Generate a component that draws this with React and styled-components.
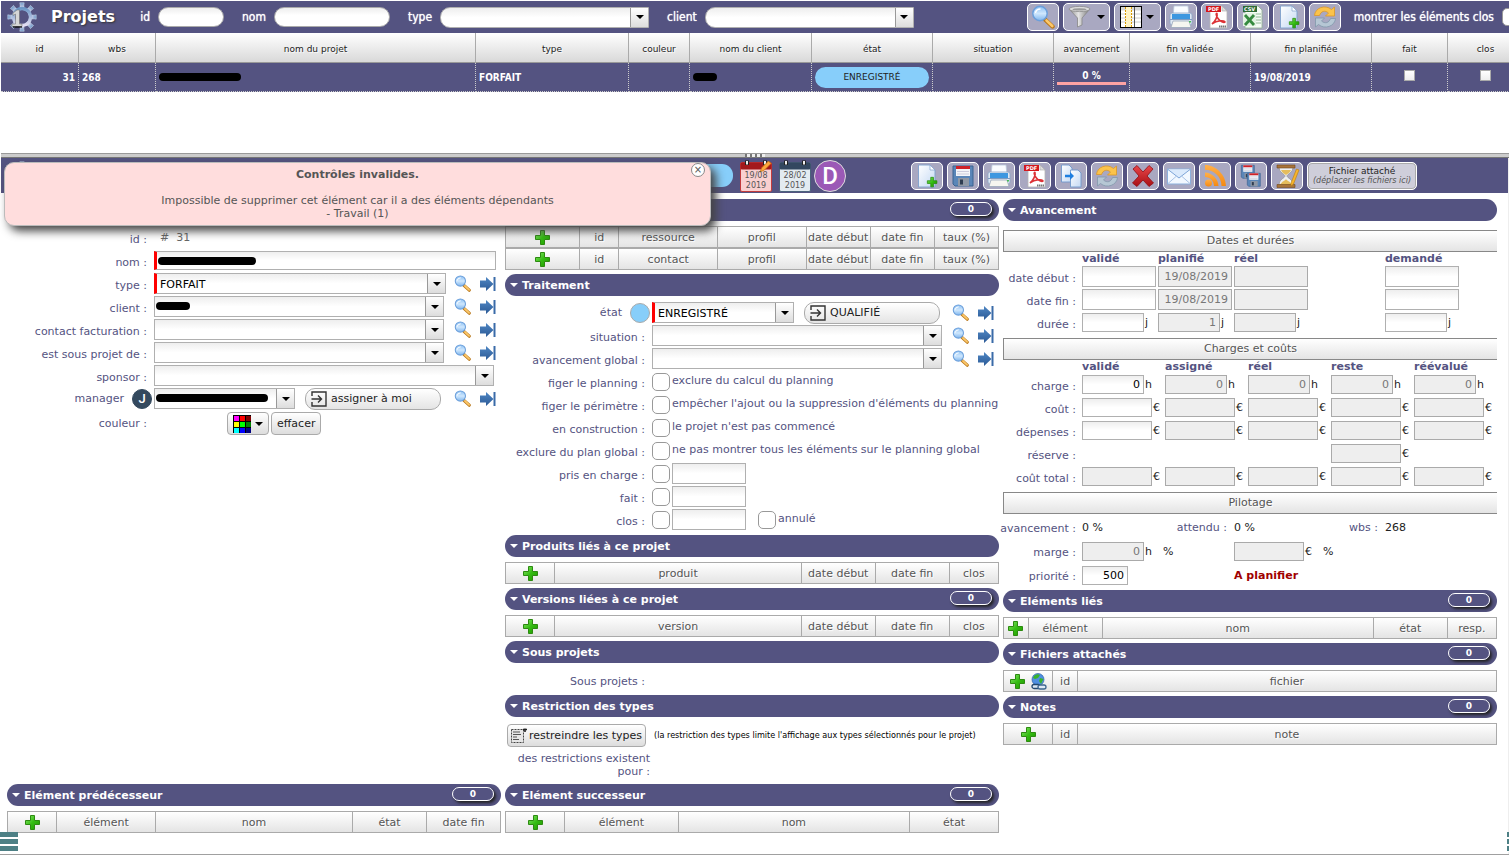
import React from 'react';
import styled, { createGlobalStyle, css } from 'styled-components';

const PRIMARY = '#545381';
const SANS = '"DejaVu Sans", Verdana, sans-serif';
const NARROW = '"DejaVu Sans Condensed", "DejaVu Sans", Tahoma, sans-serif';

const GlobalStyle = createGlobalStyle`
  *, *::before, *::after {
    box-sizing: border-box;
  }

  body {
    margin: 0;
    background: #fff;
    font-family: ${SANS};
    font-size: 11px;
    line-height: 13px;
    color: #000;
    overflow: hidden;
  }

  button, input, select {
    font: inherit;
    color: inherit;
    margin: 0;
    padding: 0;
  }

  svg {
    display: block;
    flex: none;
  }
`;

/* ---------- icons ---------- */

const HiddenSvg = styled.svg`
  position: absolute;
  width: 0;
  height: 0;
`;

const Gradients = () => (
  <HiddenSvg aria-hidden="true">
    <defs>
      <linearGradient id="lens" x1="0" y1="0" x2="0" y2="1">
        <stop offset="0" stopColor="#8cc0f4" />
        <stop offset="0.5" stopColor="#cfe7fd" />
        <stop offset="1" stopColor="#7fb6ee" />
      </linearGradient>
      <linearGradient id="green" x1="0" y1="0" x2="1" y2="1">
        <stop offset="0" stopColor="#8be86f" />
        <stop offset="0.5" stopColor="#35bd12" />
        <stop offset="1" stopColor="#1f9400" />
      </linearGradient>
      <linearGradient id="paper" x1="0" y1="0" x2="1" y2="1">
        <stop offset="0" stopColor="#fff" />
        <stop offset="1" stopColor="#c3d8f3" />
      </linearGradient>
      <linearGradient id="metal" x1="0" y1="0" x2="1" y2="0">
        <stop offset="0" stopColor="#8a8a8a" />
        <stop offset="0.45" stopColor="#e4e4e4" />
        <stop offset="1" stopColor="#777" />
      </linearGradient>
      <linearGradient id="red" x1="0" y1="0" x2="0" y2="1">
        <stop offset="0" stopColor="#e8474a" />
        <stop offset="1" stopColor="#a90f14" />
      </linearGradient>
      <linearGradient id="orange" x1="0" y1="0" x2="0" y2="1">
        <stop offset="0" stopColor="#ffb04a" />
        <stop offset="1" stopColor="#f58a12" />
      </linearGradient>
      <linearGradient id="blue" x1="0" y1="0" x2="0" y2="1">
        <stop offset="0" stopColor="#4f87c4" />
        <stop offset="1" stopColor="#2c5a96" />
      </linearGradient>
      <linearGradient id="gear" x1="0" y1="0" x2="0" y2="1">
        <stop offset="0" stopColor="#6d97c6" />
        <stop offset="1" stopColor="#e4dff3" />
      </linearGradient>
    </defs>
  </HiddenSvg>
);

const GearIcon = () => (
  <svg width="30" height="30" viewBox="0 0 30 30">
    <g fill="url(#gear)" stroke="#c5d3e6" strokeWidth="0.6">
      {[0, 45, 90, 135, 180, 225, 270, 315].map((a) => (
        <path key={a} d="M12.8 7 L13.2 3 L12.8 0.8 H17.2 L16.8 3 L17.2 7 Z" transform={`rotate(${a} 15 15)`} />
      ))}
    </g>
    <circle cx="15" cy="15" r="8.4" fill="none" stroke="url(#gear)" strokeWidth="3.6" />
    <circle cx="15" cy="15" r="6.6" fill={PRIMARY} />
    <path d="M6 11 L10 8 H12.5 V22 H15 V24.5 H5 V22 H8.5 V12 L6 13.5 Z" fill="#d6d6d6" stroke="#666" strokeWidth="0.5" />
    <path d="M6 25 H15" stroke="#000" strokeWidth="1.2" />
  </svg>
);

const SearchIcon = ({ size = 24 }) => (
  <svg width={size} height={size} viewBox="0 0 24 24">
    <path d="M14 14.5 L21.5 21.5" stroke="#b9771a" strokeWidth="4.4" strokeLinecap="round" />
    <path d="M15.5 15.5 L21.3 21" stroke="#fcc86a" strokeWidth="2.6" strokeLinecap="round" />
    <circle cx="9" cy="8.5" r="7.2" fill="url(#lens)" stroke="#6b9fdb" strokeWidth="1.5" />
    <path d="M4.5 8 Q5 4 9.5 4" stroke="#fff" strokeWidth="1.4" fill="none" />
  </svg>
);

const GotoIcon = () => (
  <svg width="16" height="16" viewBox="0 0 16 16">
    <path d="M0 4.5 H6 V1 L13.5 8 L6 15 V11.5 H0 Z" fill="url(#blue)" />
    <path d="M14.5 1 V15" stroke="#3a6ba8" strokeWidth="2" />
  </svg>
);

const FunnelIcon = () => (
  <svg width="26" height="24" viewBox="0 0 26 24">
    <path d="M2 4 L10.5 13 V22 L15 20 V13 L23 4 Z" fill="url(#metal)" stroke="#888" strokeWidth="0.8" />
    <ellipse cx="12.5" cy="4" rx="10.5" ry="2.6" fill="#ddd" stroke="#8d8d8d" strokeWidth="0.8" />
    <ellipse cx="12.5" cy="4.4" rx="7" ry="1.2" fill="#999" />
  </svg>
);

const ColumnsIcon = () => (
  <svg width="22" height="22" viewBox="0 0 22 22">
    <rect x="0.5" y="0.5" width="21" height="21" fill="#fff" stroke="#000" />
    <path d="M1 1 H21 V4.5 H1 Z" fill="#d6d6d6" />
    <path d="M1 8 H21 M1 12 H21 M1 16 H21" stroke="#ccc" />
    <path d="M14.5 1 V21" stroke="#555" />
    <rect x="6" y="1" width="5" height="20" fill="#fff3c4" />
    <path d="M5.5 1 V21 M11.5 1 V21" stroke="#d99a00" strokeDasharray="2 1" />
  </svg>
);

const PrintIcon = () => (
  <svg width="26" height="24" viewBox="0 0 26 24">
    <path d="M6 1 H20 L21 11 H5 Z" fill="#fafcff" stroke="#b9c8dc" strokeWidth="0.8" />
    <rect x="2" y="8" width="22" height="12" rx="2" fill="#dfe8f4" stroke="#8ba4c4" strokeWidth="0.8" />
    <rect x="4" y="9" width="18" height="5" fill="#3d97e0" />
    <path d="M2 14.5 H24" stroke="#7e9cc2" />
    <path d="M5 16 H21 L23 22.5 H3 Z" fill="#f6f6f0" stroke="#9aa8bb" strokeWidth="0.8" />
    <rect x="21" y="16" width="2" height="1.5" fill="#4b5" />
  </svg>
);

const TagText = styled.text`
  font-family: ${SANS};
  font-size: 5px;
  font-weight: bold;
  fill: #fff;
`;

const PdfIcon = () => (
  <svg width="24" height="24" viewBox="0 0 24 24">
    <path d="M5 1 H17 L22 6 V23 H5 Z" fill="#fff" stroke="#b5b5b5" strokeWidth="0.8" />
    <path d="M17 1 V6 H22 Z" fill="#ddd" stroke="#aaa" strokeWidth="0.6" />
    <rect x="1" y="1" width="15" height="6" fill="#d3181d" />
    <TagText x="3" y="6">PDF</TagText>
    <path d="M7 19 C10 17 13 11 12 8.5 C11 8 10.5 10 13 13.5 C15 16.5 19 18 20 17 C20 15 12 15 7 19 Z" fill="none" stroke="#dc3236" strokeWidth="1.6" />
    <path d="M14 21.5 H21" stroke="#777" strokeWidth="2" strokeDasharray="1.5 0.5" />
  </svg>
);

const CsvIcon = () => (
  <svg width="24" height="24" viewBox="0 0 24 24">
    <path d="M4 1 H17 L21 5 V23 H4 Z" fill="#f5fbf5" stroke="#8fae92" strokeWidth="0.8" />
    <path d="M13 9 H20 M13 12 H20 M13 15 H20 M13 18 H20" stroke="#8fb895" />
    <rect x="2" y="1" width="14" height="6" fill="#2e6b35" />
    <TagText x="3" y="6">CSV</TagText>
    <rect x="2" y="8" width="13" height="13" fill="#e3f2e3" />
    <path d="M4 10 L13 20 M13 10 L4 20" stroke="#358a3f" strokeWidth="2.8" />
  </svg>
);

const PLUS = 'M5.5 0.5 H9.5 V5.5 H14.5 V9.5 H9.5 V14.5 H5.5 V9.5 H0.5 V5.5 H5.5 Z';

const PlusIcon = () => (
  <svg width="15" height="15" viewBox="0 0 15 15">
    <path d={PLUS} fill="url(#green)" stroke="#2d8a10" />
  </svg>
);

const NewIcon = () => (
  <svg width="24" height="24" viewBox="0 0 24 24">
    <path d="M3.5 1 H15 L20 6 V23 H3.5 Z" fill="url(#paper)" stroke="#7ea0cc" strokeWidth="0.9" />
    <path d="M15 1 V6 H20 Z" fill="#fff" stroke="#7ea0cc" strokeWidth="0.7" />
    <path d={PLUS} transform="translate(12 13) scale(0.68)" fill="url(#green)" stroke="#1f8500" />
  </svg>
);

const RefreshIcon = () => (
  <svg width="24" height="24" viewBox="0 0 24 24">
    <path d="M1.5 10.5 C2 3 12 -1 18.5 4.5 L21.5 2 V11 H12.5 L15.5 8 C12 5 8 6 6.5 10.5 Z" fill="#fbc34b" stroke="#dc9827" strokeWidth="0.8" />
    <path d="M22.5 13.5 C22 21 12 25 5.5 19.5 L2.5 22 V13 H11.5 L8.5 16 C12 19 16 18 17.5 13.5 Z" fill="#b6c7d4" stroke="#8297ab" strokeWidth="0.8" />
  </svg>
);

const Floppy = () => (
  <>
    <path d="M2 2 H22 V22 H4 L2 20 Z" fill="#5a86b8" stroke="#3b6290" />
    <rect x="5" y="2" width="14" height="10" fill="#f3f5f8" />
    <rect x="5" y="2" width="14" height="3" fill="#cf2229" />
    <path d="M6 7.5 H18 M6 10 H18" stroke="#ccd" />
    <rect x="7" y="14" width="11" height="8" fill="#8f98a5" />
    <rect x="9" y="15.5" width="3" height="5" fill="#2e3c50" />
  </>
);

const SaveIcon = () => (
  <svg width="24" height="24" viewBox="0 0 24 24"><Floppy /></svg>
);

const MultiSaveIcon = () => (
  <svg width="24" height="24" viewBox="0 0 24 24">
    <g transform="translate(1 0) scale(0.65)"><Floppy /></g>
    <g transform="translate(7 8) scale(0.65)"><Floppy /></g>
  </svg>
);

const CopyIcon = () => (
  <svg width="24" height="24" viewBox="0 0 24 24">
    <path d="M2.5 1 H10 L13 4 V18 H2.5 Z" fill="url(#paper)" stroke="#6f97cc" strokeWidth="0.9" />
    <path d="M11.5 6 H19 L22 9 V23 H11.5 Z" fill="url(#paper)" stroke="#6f97cc" strokeWidth="0.9" />
    <path d="M6 10.8 H11 V8 L15 12 L11 16 V13.2 H6 Z" fill="#1f7fe0" />
  </svg>
);

const DeleteIcon = () => (
  <svg width="24" height="24" viewBox="0 0 24 24">
    <path d="M2 5 L6 1.5 L12 8 L18 1.5 L22 5 L16 12 L22.5 19 L18 22.5 L12 16 L6 22.5 L1.5 19 L8 12 Z" fill="url(#red)" stroke="#8f0d12" strokeWidth="0.8" />
  </svg>
);

const MailIcon = () => (
  <svg width="26" height="24" viewBox="0 0 26 24">
    <rect x="1.5" y="5" width="23" height="15" fill="#f2f8ff" stroke="#8db0dc" />
    <path d="M2 19.5 L10 12.5 M24 19.5 L16 12.5" stroke="#a9c3e6" />
    <path d="M2 5.5 L13 14 L24 5.5" fill="#dbeafc" stroke="#7ea5d8" />
  </svg>
);

const RssIcon = () => (
  <svg width="24" height="24" viewBox="0 0 24 24" fill="url(#orange)">
    <circle cx="5.5" cy="19" r="3.5" />
    <path d="M2 8.5 C9 8.5 15.5 15 15.5 22 H11 C11 17 7 13 2 13 Z" />
    <path d="M2 1 C13 1 23 11 23 22 H18.5 C18.5 13 11 5.8 2 5.8 Z" />
  </svg>
);

const HourglassIcon = () => (
  <svg width="26" height="24" viewBox="0 0 26 24">
    <path d="M5 3 C5 9 11 10 11 12 C11 14 5 15 5 21 H19 C19 15 13 14 13 12 C13 10 19 9 19 3 Z" fill="#eef0f2" stroke="#999" strokeWidth="0.8" />
    <path d="M7 6 H17 C16 9 13 10 12 11 C11 10 8 9 7 6 Z M6 21 C8 17 11 17 12 15 C13 17 16 17 18 21 Z" fill="#e5bd5c" />
    <path d="M3 1 H21 V4 H3 Z M3 20.5 H21 V23.5 H3 Z" fill="#a8743a" stroke="#70481c" strokeWidth="0.6" />
    <path d="M17 19 L22.5 5 L25 6 L19.5 20 L17 22 Z" fill="#f7b52c" stroke="#b97a10" strokeWidth="0.6" />
  </svg>
);

const AssignIcon = () => (
  <svg width="16" height="16" viewBox="0 0 16 16" fill="none" stroke="#333" strokeWidth="1.4">
    <path d="M1 5 V1 H15 V15 H1 V11" />
    <path d="M0.5 8 H10 M7 4.5 L10.5 8 L7 11.5" />
  </svg>
);

const GlobeLinkIcon = () => (
  <svg width="16" height="17" viewBox="0 0 16 17">
    <circle cx="7" cy="6.5" r="6" fill="#4f8fe0" stroke="#2b62ab" strokeWidth="0.7" />
    <path d="M3 3 Q6 0 9 2 L7 5 L4 6 L2 5 Z M9 5 L12.5 6 L10 11 L8 8 Z" fill="#39b42c" />
    <rect x="1" y="11.5" width="8" height="4" rx="2" fill="#dce8f5" stroke="#22486f" strokeWidth="1.3" />
    <rect x="7" y="12" width="8" height="4" rx="2" fill="#dce8f5" stroke="#3d668f" strokeWidth="1.3" />
  </svg>
);

const ListIcon = () => (
  <svg width="16" height="16" viewBox="0 0 16 16">
    <rect x="0.5" y="1.5" width="12" height="13" fill="#e6e6e6" stroke="#444" strokeDasharray="2 1" />
    <path d="M2 4 H9 M2 6.5 H10 M2 9 H6 M2 11.5 H8" stroke="#555" />
    <path d="M12 1.5 H16 M14 0.5 V4" stroke="#222" strokeWidth="1.6" />
  </svg>
);

const PaletteIcon = () => {
  const colors = ['#f0f', '#f00', '#800000', '#ff0', '#0f0', '#008000', '#0ff', '#00f', '#000080'];
  return (
    <svg width="18" height="18" viewBox="0 0 18 18">
      <rect width="18" height="18" />
      {colors.map((color, i) => (
        <rect key={color} x={1 + (i % 3) * 6} y={1 + Math.floor(i / 3) * 6} width="5" height="5" fill={color} />
      ))}
    </svg>
  );
};

const Caret = ({ color = '#000' }) => (
  <svg width="8" height="4" viewBox="0 0 8 4">
    <path d="M0 0 H8 L4 4 Z" fill={color} />
  </svg>
);

const CalendarShape = ({ dark, fill, edge, pencil }) => (
  <svg width="32" height="32" viewBox="0 0 32 32">
    <rect x="0.5" y="2.5" width="31" height="29" rx="1.5" fill={fill} stroke={edge} />
    <rect x="0.5" y="2.5" width="31" height="7" rx="1.5" fill={dark} />
    <path d="M7 0.5 V5 M25 0.5 V5" stroke="#222" strokeWidth="4" />
    <path d="M7 1 V4.5 M25 1 V4.5" stroke="#eee" strokeWidth="2" />
    {pencil && <path d="M20 12 L22 7.5 L28.5 1 L31 3.5 L24.5 10 Z" fill="#fba83c" stroke="#c96f10" strokeWidth="0.7" />}
  </svg>
);

/* ---------- list pane ---------- */

const Page = styled.div`
  display: flex;
  flex-direction: column;
  min-height: 100vh;
  padding: 1px 0 0 1px;
  position: relative;
  border-bottom: 1px solid #a0a0a0;
  overflow: hidden;
`;

const ListPane = styled.section`
  min-height: 152px;
`;

const TopBar = styled.header`
  display: flex;
  align-items: center;
  height: 32px;
  padding-left: 6px;
  background: ${PRIMARY};
  color: #fff;
`;

const PageTitle = styled.h1`
  margin: 0 25px 0 14px;
  font-size: 16px;
  line-height: 20px;
  text-shadow: 1px 1px 2px #333;
`;

const Filters = styled.form`
  display: flex;
  gap: 18px;
`;

const FilterLabel = styled.label`
  display: flex;
  align-items: center;
  gap: 8px;
  font-family: ${NARROW};
  font-size: 12px;
  white-space: nowrap;
  text-shadow: 0 0 1px #fff;
`;

const FilterInput = styled.input`
  width: ${({ $width }) => $width}px;
  height: 20px;
  padding: 0 8px;
  border: 1px solid #aaa;
  border-radius: 10px;
  background: linear-gradient(#eee, #fff 40%);
  color: #000;
`;

const Toolbar = styled.div`
  display: flex;
  align-items: center;
  gap: 4px;
  margin-left: auto;
`;

const ListToolbar = styled(Toolbar)`
  margin-right: -11px;
`;

const ToolButton = styled.button`
  display: flex;
  align-items: center;
  justify-content: center;
  gap: 4px;
  flex: none;
  width: ${({ $wide }) => ($wide ? 47 : 32)}px;
  height: 28px;
  border: 1px solid #fff;
  border-radius: 5px;
  background: #a9a8c1;
`;

const ClosedLabel = styled(FilterLabel)`
  margin-left: 9px;
`;

const CheckBox = styled.input`
  appearance: none;
  flex: none;
  width: 18px;
  height: 18px;
  border: 1px solid #999;
  border-radius: 5px;
  background: #fff;

  &:checked {
    background: ${PRIMARY};
  }
`;

const ListTable = styled.table`
  width: calc(100% + 15px);
  table-layout: fixed;
  border-spacing: 0;
  font-size: 9px;

  th {
    height: 30px;
    padding: 3px 0 0;
    border-right: 1px solid #aaa;
    border-bottom: 1px solid #999;
    background: linear-gradient(#fff, #d9d9d9);
    font-weight: normal;
    color: #222;
    text-shadow: 1px 1px 1px #fff;
  }

  td {
    height: 29px;
    padding: 0 3px;
    border-right: 1px dotted #ccc;
    border-bottom: 1px dotted #ccc;
    background: ${PRIMARY};
    color: #fff;
    font-family: ${NARROW};
    font-weight: bold;
    font-size: 10px;
  }
`;

const RightCell = styled.td`
  text-align: right;
`;

const CenterCell = styled.td`
  text-align: center;
`;

const StatusPill = styled.span`
  display: block;
  padding: 4px 0;
  border-radius: 11px;
  background: #87cefa;
  color: #222;
  font-family: ${SANS};
  font-size: 9px;
  font-weight: normal;
  text-align: center;
`;

const ProgressCell = styled.div`
  border-bottom: 3px solid #ffa3a3;
`;

const SmallCheck = styled.input`
  appearance: none;
  width: 11px;
  height: 11px;
  border: 1px solid #aaa;
  background: linear-gradient(#fff, #eee);
`;

const Redacted = styled.span`
  display: block;
  width: ${({ $width }) => $width}px;
  height: ${({ $height }) => $height || 8}px;
  border-radius: 4px;
  background: #000;
`;

const Splitter = styled.div`
  display: flex;
  justify-content: center;
  align-items: center;
  height: 5px;
  border-top: 1px solid #999;
  border-bottom: 1px solid #777;
  background: #ccc;
`;

const Grip = styled.span`
  width: 20px;
  height: 3px;
  background: repeating-linear-gradient(90deg, #777 0 2px, #eee 2px 5px);
`;

/* ---------- detail pane ---------- */

const DetailPane = styled.section`
  position: relative;
  flex: 1;
  border-right: 1px solid #eee;
`;

const DetailBar = styled.header`
  display: flex;
  align-items: center;
  height: 35px;
  padding-right: 91px;
  background: ${PRIMARY};
  color: #fff;
`;

const DetailTitle = styled.div`
  display: flex;
  align-items: center;
  flex: 0 0 732px;
  padding-left: 6px;

  ${StatusPill} {
    width: 120px;
    height: 23px;
    margin-left: auto;
  }
`;

const Calendars = styled.div`
  display: flex;
  align-items: center;
  gap: 7px;
  margin-left: 7px;
`;

const CalendarBox = styled.div`
  display: grid;
  color: #555;
  font-size: 8px;
  line-height: 10px;
  text-align: center;

  > * {
    grid-area: 1 / 1;
  }

  span {
    padding-top: 11px;
  }
`;

const Avatar = styled.span`
  display: flex;
  align-items: center;
  justify-content: center;
  flex: none;
  width: ${({ $size }) => $size}px;
  height: ${({ $size }) => $size}px;
  border: 1px solid ${({ $edge }) => $edge || '#ddd'};
  border-radius: 50%;
  background: ${({ $color }) => $color};
  color: #fff;
  font-family: Roboto, sans-serif;
  font-weight: 500;
  font-size: ${({ $size }) => ($size > 24 ? 24 : 13)}px;
  line-height: 1;
`;

const UserAvatar = styled(Avatar)`
  margin-left: 3px;
`;

const DropZone = styled.button`
  height: 28px;
  width: 110px;
  padding: 0 2px;
  border: 1px solid #fff;
  border-radius: 5px;
  background: #cfceda;
  color: #222;
  font-size: 9px;
  line-height: 9px;
  white-space: nowrap;
  box-shadow: inset 0 0 0 1px #aaa;

  em {
    display: block;
    color: #555;
    font-size: 8px;
  }
`;

const Toast = styled.div`
  position: absolute;
  top: 4px;
  left: 3px;
  width: 707px;
  padding: 5px 0;
  border: 1px solid #bbb;
  border-radius: 10px;
  background: #ffdddd;
  box-shadow: 5px 5px 10px #444;
  color: #555;
  text-align: center;

  p {
    margin: 13px 0 0;
  }
`;

const CloseButton = styled.button`
  position: absolute;
  top: 0;
  right: 5px;
  width: 14px;
  height: 14px;
  border: 1px solid #888;
  border-radius: 50%;
  background: #fff;
  color: #555;
  font-size: 10px;
  line-height: 10px;
`;

const Columns = styled.main`
  display: grid;
  grid-template-columns: repeat(3, minmax(0, 1fr));
  grid-template-rows: auto auto;
  column-gap: 4px;
  padding: 6px 11px 0 6px;
`;

const SideColumn = styled.div`
  grid-column: 3;
  grid-row: 1 / 3;
`;

const Heading = styled.h2`
  display: flex;
  align-items: center;
  gap: 4px;
  height: 22px;
  margin: 0 0 5px;
  padding: 0 7px 0 5px;
  border-radius: 11px;
  background: ${PRIMARY};
  color: #fff;
  font-size: 11px;
  line-height: 13px;
`;

const Count = styled.span`
  width: 42px;
  height: 14px;
  margin: 0 0 3px auto;
  border: 1px solid #fff;
  border-radius: 7px;
  box-shadow: 2px 2px 3px #222;
  font-size: 9px;
  line-height: 12px;
  text-align: center;
`;

const HeadTable = styled.table`
  width: 100%;
  table-layout: fixed;
  border-spacing: 0;
  border: 1px solid #aaa;
  border-left: 0;
  margin-bottom: ${({ $stacked }) => ($stacked ? 0 : 4)}px;

  th {
    height: 20px;
    padding: 0;
    border-left: 1px solid #aaa;
    background: linear-gradient(#fff, #e4e4e4);
    color: #555;
    font-weight: normal;
    white-space: nowrap;
    text-shadow: 1px 1px 1px #fff;
  }
`;

const IconButton = styled.button`
  display: inline-flex;
  align-items: center;
  border: 0;
  background: none;
  vertical-align: middle;
  margin: 0 3px;
`;

const Form = styled.div`
  padding: 1px 0 3px;
`;

const Row = styled.div`
  display: grid;
  grid-template-columns: 147px minmax(0, 1fr);
  grid-template-rows: 21px;
  height: 23px;
  padding-right: 5px;
`;

const Label = styled.label`
  display: flex;
  align-items: center;
  justify-content: flex-end;
  gap: 8px;
  padding: ${({ $avatar }) => ($avatar ? '0 2px 0 0' : '3px 7px 0 0')};
  color: ${PRIMARY};
  white-space: nowrap;
`;

const Fields = styled.div`
  display: flex;
  align-items: center;
  color: ${PRIMARY};
`;

const boxStyle = css`
  border: 1px solid #b0b0b0;
  background: linear-gradient(#eee, #fff 50%);
  ${({ $required }) => $required && 'border-left: 3px solid #f00;'}
`;

const SelectBox = styled.span`
  display: flex;
  position: relative;
  flex: ${({ $width }) => ($width ? `0 0 ${$width}px` : 1)};
  height: 21px;
  margin-right: ${({ $required, $width }) => ($required || $width ? 0 : 2)}px;
  ${boxStyle}
  border-radius: ${({ $round }) => ($round ? '10px 0 0 10px' : 0)};

  select {
    appearance: none;
    flex: 1;
    min-width: 0;
    padding: 1px 22px 0 3px;
    border: 0;
    background: none;
    color: #000;
  }
`;

const SelectArrow = styled.span`
  display: flex;
  align-items: center;
  justify-content: center;
  width: 18px;
  margin-left: -18px;
  border-left: 1px solid #999;
  background: linear-gradient(#fff, #ddd);
  pointer-events: none;
`;

const Cover = styled.span`
  position: absolute;
  left: 1px;
  top: 5px;
`;

const TextBox = styled.span`
  position: relative;
  display: flex;
  flex: 1;
  height: 19px;
  ${boxStyle}

  input {
    flex: 1;
    border: 0;
    background: none;
  }
`;

const Input = styled.input`
  flex: none;
  width: ${({ $width }) => $width}px;
  height: ${({ $tall }) => ($tall ? 21 : 19)}px;
  padding: 0 3px;
  ${boxStyle}
  color: #000;
  text-align: right;

  &:disabled {
    border-color: #aaa;
    background: #eee;
    color: #777;
  }
`;

const RowIcons = styled.span`
  display: flex;
  gap: 9px;
  margin-left: auto;
  padding-left: 8px;

  ${IconButton} {
    margin: 0;
  }
`;

const ActionButton = styled.button`
  display: flex;
  align-items: center;
  gap: 4px;
  width: 136px;
  height: 22px;
  margin-left: 10px;
  padding: 0 5px;
  border: 1px solid #aaa;
  border-radius: 10px;
  background: linear-gradient(#fff, #e4e4e4);
  color: #222;
`;

const SmallButton = styled.button`
  display: flex;
  align-items: center;
  gap: ${({ $tight }) => ($tight ? 2 : 4)}px;
  height: 23px;
  padding: 0 ${({ $tight }) => ($tight ? 3 : 5)}px;
  border: 1px solid #aaa;
  border-radius: 4px;
  background: linear-gradient(#fff, #ddd);
  color: #222;
  white-space: nowrap;
`;

const ColorButtons = styled(Fields)`
  align-items: flex-start;
  gap: 2px;
  padding: 1px 0 0 73px;
`;

const CheckLabel = styled.label`
  display: flex;
  align-items: center;
  gap: 2px;
  white-space: nowrap;
`;

const CheckText = styled.span`
  padding-bottom: 3px;
`;

const Cancelled = styled(CheckLabel)`
  margin-left: 12px;
`;

const ProjectId = styled.span`
  padding-left: 6px;
  color: #666;
`;

const SubProjects = styled.p`
  width: 145px;
  margin: 0;
  padding: 7px 5px 7px 0;
  color: ${PRIMARY};
  text-align: right;
`;

const Restriction = styled.div`
  display: flex;
  align-items: center;
  gap: 8px;
  padding: 2px 2px 5px;
  font-family: ${NARROW};
  font-size: 9px;
  white-space: nowrap;

  ${SmallButton} {
    font-family: ${SANS};
    font-size: 11px;
  }
`;

const RestrictionText = styled.p`
  width: 145px;
  margin: 0 0 6px;
  padding-left: 10px;
  color: ${PRIMARY};
  text-align: right;
`;

const SubHeading = styled.h3`
  height: 22px;
  margin: 0;
  border: 1px solid #888;
  border-right: 0;
  background: linear-gradient(#fff, #e4e4e4);
  color: #555;
  font-size: 11px;
  font-weight: normal;
  line-height: 20px;
  text-align: center;
  text-shadow: 1px 1px 1px #fff;
`;

const Progress = styled.div`
  padding-top: 4px;
`;

const FormGrid = styled.div`
  display: grid;
  grid-template-columns: 79px ${({ $cols }) => $cols};
  grid-template-rows: 14px;
  grid-auto-rows: 23px;
  margin-bottom: 3px;
  color: #222;
`;

const DATE_COLUMNS = 'minmax(0, 76fr) minmax(0, 76fr) minmax(0, 151fr) minmax(0, 112fr)';

const DateGrid = styled(FormGrid).attrs({ $cols: DATE_COLUMNS })``;

const CostGrid = styled(FormGrid).attrs({ $cols: 'repeat(5, minmax(0, 1fr))' })``;

const PilotGrid = styled(FormGrid).attrs({ $cols: DATE_COLUMNS })`
  grid-template-rows: none;
  grid-auto-rows: 24px;
  padding-top: 2px;
  margin-bottom: 2px;
`;

const ColHead = styled.span`
  color: ${PRIMARY};
  font-weight: bold;
`;

const GridLabel = styled(Label)`
  padding: 1px 6px 0 0;
`;

const Cell = styled.span`
  display: flex;
  align-items: center;
  gap: 1px;
  padding-bottom: 2px;
  white-space: nowrap;
`;

const Split = styled(Cell)`
  justify-content: ${({ $label }) => ($label ? 'flex-end' : 'space-between')};
  padding-right: 7px;
  color: ${({ $label }) => ($label ? PRIMARY : 'inherit')};

  span {
    color: ${PRIMARY};
  }
`;

const Gap = styled.span`
  margin-left: 10px;
`;

const Planned = styled.strong`
  color: #a00000;
`;

const MenuHandle = styled.button`
  position: absolute;
  bottom: 2px;
  left: ${({ $right }) => ($right ? 'auto' : '0')};
  right: ${({ $right }) => ($right ? '-16px' : 'auto')};
  width: 18px;
  height: 20px;
  border: 0;
  background: repeating-linear-gradient(#4d8085 0 5px, #fff 5px 7px);
`;

/* ---------- data ---------- */

const LIST_COLUMNS = [
  ['id', 78],
  ['wbs', 77],
  ['nom du projet'],
  ['type', 153],
  ['couleur', 61],
  ['nom du client', 122],
  ['état', 121],
  ['situation', 121],
  ['avancement', 76],
  ['fin validée', 121],
  ['fin planifiée', 121],
  ['fait', 76],
  ['clos', 76],
];

const RESOURCE_WIDTHS = [15, 8, 20, 18, 13, 13, 13];
const LINK_WIDTHS = [10, 50, 15, 15, 10];

const COST_ROWS = [
  { label: 'charge', unit: 'h', value: '0', width: 62 },
  { label: 'coût', unit: '€', width: 70 },
  { label: 'dépenses', unit: '€', width: 70 },
  { label: 'réserve', unit: '€', width: 70, only: 3 },
  { label: 'coût total', unit: '€', width: 70, locked: true },
];

const COST_COLUMNS = ['validé', 'assigné', 'réel', 'reste', 'réévalué'];

/* ---------- components ---------- */

const Section = ({ title, count }) => (
  <Heading>
    <Caret color="#fff" />
    {title}
    {count !== undefined && <Count>{count}</Count>}
  </Heading>
);

const AddTable = ({ columns, widths, stacked, link }) => (
  <HeadTable $stacked={stacked}>
    <colgroup>
      {widths.map((width, i) => <col key={i} width={`${width}%`} />)}
    </colgroup>
    <thead>
      <tr>
        <th>
          <IconButton type="button" aria-label="ajouter"><PlusIcon /></IconButton>
          {link && <IconButton type="button" aria-label="ajouter un lien"><GlobeLinkIcon /></IconButton>}
        </th>
        {columns.map((column) => <th key={column}>{column}</th>)}
      </tr>
    </thead>
  </HeadTable>
);

const Select = ({ id, value = '', required, width, round, redacted }) => (
  <SelectBox $required={required} $width={width} $round={round}>
    <select id={id} defaultValue={value} aria-label={id}>
      <option value={value}>{value}</option>
    </select>
    <SelectArrow><Caret /></SelectArrow>
    {redacted && <Cover><Redacted $width={redacted} /></Cover>}
  </SelectBox>
);

const LookupIcons = () => (
  <RowIcons>
    <IconButton type="button" aria-label="rechercher"><SearchIcon size={17} /></IconButton>
    <IconButton type="button" aria-label="aller à"><GotoIcon /></IconButton>
  </RowIcons>
);

const SelectRow = ({ id, label, lookup = true, ...select }) => (
  <Row>
    <Label htmlFor={id}>{label} :</Label>
    <Fields>
      <Select id={id} {...select} />
      {lookup && <LookupIcons />}
    </Fields>
  </Row>
);

const CheckRow = ({ id, label, text }) => (
  <Row>
    <Label htmlFor={id}>{label} :</Label>
    <Fields>
      <CheckLabel>
        <CheckBox type="checkbox" id={id} />
        <CheckText>{text}</CheckText>
      </CheckLabel>
    </Fields>
  </Row>
);

const DateRow = ({ id, label, children }) => (
  <Row>
    <Label htmlFor={id}>{label} :</Label>
    <Fields>
      <CheckLabel>
        <CheckBox type="checkbox" id={id} />
        <Input $width={74} $tall aria-label={`date ${label}`} />
      </CheckLabel>
      {children}
    </Fields>
  </Row>
);

const ProjectList = () => (
  <ListPane>
    <TopBar>
      <GearIcon />
      <PageTitle>Projets</PageTitle>
      <Filters>
        <FilterLabel>id<FilterInput $width={66} /></FilterLabel>
        <FilterLabel>nom<FilterInput $width={116} /></FilterLabel>
        <FilterLabel>type<Select id="filtre-type" width={209} round /></FilterLabel>
        <FilterLabel>client<Select id="filtre-client" width={209} round /></FilterLabel>
      </Filters>
      <ListToolbar>
        <ToolButton aria-label="rechercher"><SearchIcon /></ToolButton>
        <ToolButton aria-label="filtrer" $wide><FunnelIcon /><Caret /></ToolButton>
        <ToolButton aria-label="colonnes" $wide><ColumnsIcon /><Caret /></ToolButton>
        <ToolButton aria-label="imprimer"><PrintIcon /></ToolButton>
        <ToolButton aria-label="exporter en PDF"><PdfIcon /></ToolButton>
        <ToolButton aria-label="exporter en CSV"><CsvIcon /></ToolButton>
        <ToolButton aria-label="nouveau"><NewIcon /></ToolButton>
        <ToolButton aria-label="rafraîchir"><RefreshIcon /></ToolButton>
        <ClosedLabel>montrer les éléments clos<CheckBox type="checkbox" /></ClosedLabel>
      </ListToolbar>
    </TopBar>
    <ListTable>
      <colgroup>
        {LIST_COLUMNS.map(([name, width]) => <col key={name} width={width} />)}
      </colgroup>
      <thead>
        <tr>{LIST_COLUMNS.map(([name]) => <th key={name}>{name}</th>)}</tr>
      </thead>
      <tbody>
        <tr>
          <RightCell>31</RightCell>
          <td>268</td>
          <td><Redacted $width={82} /></td>
          <td>FORFAIT</td>
          <td />
          <td><Redacted $width={24} /></td>
          <td><StatusPill>ENREGISTRÉ</StatusPill></td>
          <td />
          <CenterCell><ProgressCell>0 %</ProgressCell></CenterCell>
          <td />
          <td>19/08/2019</td>
          <CenterCell><SmallCheck type="checkbox" aria-label="fait" /></CenterCell>
          <CenterCell><SmallCheck type="checkbox" aria-label="clos" /></CenterCell>
        </tr>
      </tbody>
    </ListTable>
  </ListPane>
);

const DetailHeader = () => (
  <DetailBar>
    <DetailTitle>
      <GearIcon />
      <StatusPill />
    </DetailTitle>
    <Calendars>
      <CalendarBox>
        <CalendarShape dark="#a3191c" fill="#f9d0d0" edge="#c23a3c" pencil />
        <span>19/08<br />2019</span>
      </CalendarBox>
      <CalendarBox>
        <CalendarShape dark="#33475f" fill="#e3ebf1" edge="#4c637c" />
        <span>28/02<br />2019</span>
      </CalendarBox>
    </Calendars>
    <UserAvatar $size={32} $color="#9b59b6">D</UserAvatar>
    <Toolbar>
      <ToolButton aria-label="nouveau"><NewIcon /></ToolButton>
      <ToolButton aria-label="enregistrer"><SaveIcon /></ToolButton>
      <ToolButton aria-label="imprimer"><PrintIcon /></ToolButton>
      <ToolButton aria-label="exporter en PDF"><PdfIcon /></ToolButton>
      <ToolButton aria-label="copier"><CopyIcon /></ToolButton>
      <ToolButton aria-label="rafraîchir"><RefreshIcon /></ToolButton>
      <ToolButton aria-label="supprimer"><DeleteIcon /></ToolButton>
      <ToolButton aria-label="envoyer"><MailIcon /></ToolButton>
      <ToolButton aria-label="s'abonner"><RssIcon /></ToolButton>
      <ToolButton aria-label="mise à jour multiple"><MultiSaveIcon /></ToolButton>
      <ToolButton aria-label="historique"><HourglassIcon /></ToolButton>
      <DropZone type="button">
        Fichier attaché
        <em>(déplacer les fichiers ici)</em>
      </DropZone>
    </Toolbar>
  </DetailBar>
);

const Description = () => (
  <div>
    <Heading />
    <Form>
      <Row>
        <Label as="span">id :</Label>
        <Fields><ProjectId>#&nbsp; 31</ProjectId></Fields>
      </Row>
      <Row>
        <Label htmlFor="nom">nom :</Label>
        <Fields>
          <TextBox $required>
            <input id="nom" />
            <Cover><Redacted $width={98} /></Cover>
          </TextBox>
        </Fields>
      </Row>
      <SelectRow id="type" label="type" value="FORFAIT" required />
      <SelectRow id="client" label="client" redacted={34} />
      <SelectRow id="contact" label="contact facturation" />
      <SelectRow id="parent" label="est sous projet de" />
      <SelectRow id="sponsor" label="sponsor" lookup={false} />
      <Row>
        <Label htmlFor="manager" $avatar>
          manager
          <Avatar $size={20} $color="#34495e" $edge="#34495e">J</Avatar>
        </Label>
        <Fields>
          <Select id="manager" width={141} redacted={112} />
          <ActionButton type="button"><AssignIcon />assigner à moi</ActionButton>
          <LookupIcons />
        </Fields>
      </Row>
      <Row>
        <Label as="span">couleur :</Label>
        <ColorButtons>
          <SmallButton type="button" aria-label="couleur"><PaletteIcon /><Caret /></SmallButton>
          <SmallButton type="button">effacer</SmallButton>
        </ColorButtons>
      </Row>
    </Form>
  </div>
);

const Treatment = () => (
  <div>
    <Section count={0} />
    <AddTable columns={['id', 'ressource', 'profil', 'date début', 'date fin', 'taux (%)']} widths={RESOURCE_WIDTHS} stacked />
    <AddTable columns={['id', 'contact', 'profil', 'date début', 'date fin', 'taux (%)']} widths={RESOURCE_WIDTHS} />
    <Section title="Traitement" />
    <Form>
      <Row>
        <Label htmlFor="etat" $avatar>
          état
          <Avatar $size={20} $color="#87cefa" $edge="#aaa" />
        </Label>
        <Fields>
          <Select id="etat" value="ENREGISTRÉ" width={142} required />
          <ActionButton type="button"><AssignIcon />QUALIFIÉ</ActionButton>
          <LookupIcons />
        </Fields>
      </Row>
      <SelectRow id="situation" label="situation" />
      <SelectRow id="avancement-global" label="avancement global" />
      <CheckRow id="planning" label="figer le planning" text="exclure du calcul du planning" />
      <CheckRow id="perimetre" label="figer le périmètre" text="empêcher l'ajout ou la suppression d'éléments du planning" />
      <CheckRow id="construction" label="en construction" text="le projet n'est pas commencé" />
      <CheckRow id="exclure" label="exclure du plan global" text="ne pas montrer tous les éléments sur le planning global" />
      <DateRow id="pris" label="pris en charge" />
      <DateRow id="fait" label="fait" />
      <DateRow id="clos" label="clos">
        <Cancelled>
          <CheckBox type="checkbox" />
          <CheckText>annulé</CheckText>
        </Cancelled>
      </DateRow>
    </Form>
    <Section title="Produits liés à ce projet" />
    <AddTable columns={['produit', 'date début', 'date fin', 'clos']} widths={LINK_WIDTHS} />
    <Section title="Versions liées à ce projet" count={0} />
    <AddTable columns={['version', 'date début', 'date fin', 'clos']} widths={LINK_WIDTHS} />
    <Section title="Sous projets" />
    <SubProjects>Sous projets :</SubProjects>
    <Section title="Restriction des types" />
    <Restriction>
      <SmallButton type="button" $tight><ListIcon />restreindre les types</SmallButton>
      (la restriction des types limite l'affichage aux types sélectionnés pour le projet)
    </Restriction>
    <RestrictionText>des restrictions existent pour :</RestrictionText>
  </div>
);

const ProgressPanel = () => (
  <Progress>
    <SubHeading>Dates et durées</SubHeading>
    <DateGrid>
      <span />
      <ColHead>validé</ColHead>
      <ColHead>planifié</ColHead>
      <ColHead>réel</ColHead>
      <ColHead>demandé</ColHead>
      {['date début', 'date fin'].map((label) => (
        <React.Fragment key={label}>
          <GridLabel htmlFor={label}>{label} :</GridLabel>
          <Cell><Input $width={74} $tall id={label} /></Cell>
          <Cell><Input $width={74} $tall disabled defaultValue="19/08/2019" aria-label={`${label} planifié`} /></Cell>
          <Cell><Input $width={74} $tall disabled aria-label={`${label} réel`} /></Cell>
          <Cell><Input $width={74} $tall aria-label={`${label} demandé`} /></Cell>
        </React.Fragment>
      ))}
      <GridLabel htmlFor="duree">durée :</GridLabel>
      <Cell><Input $width={62} id="duree" />j</Cell>
      <Cell><Input $width={62} disabled defaultValue="1" aria-label="durée planifiée" />j</Cell>
      <Cell><Input $width={62} disabled aria-label="durée réelle" />j</Cell>
      <Cell><Input $width={62} aria-label="durée demandée" />j</Cell>
    </DateGrid>

    <SubHeading>Charges et coûts</SubHeading>
    <CostGrid>
      <span />
      {COST_COLUMNS.map((column) => <ColHead key={column}>{column}</ColHead>)}
      {COST_ROWS.map((row) => (
        <React.Fragment key={row.label}>
          <GridLabel as="span">{row.label} :</GridLabel>
          {COST_COLUMNS.map((column, i) => (
            <Cell key={column}>
              {(row.only === undefined || row.only === i) && (
                <>
                  <Input
                    $width={row.width}
                    disabled={row.locked || i > 0}
                    defaultValue={row.value}
                    aria-label={`${row.label} ${column}`}
                  />
                  {row.unit}
                </>
              )}
            </Cell>
          ))}
        </React.Fragment>
      ))}
    </CostGrid>

    <SubHeading>Pilotage</SubHeading>
    <PilotGrid>
      <GridLabel as="span">avancement :</GridLabel>
      <Cell>0 %</Cell>
      <Split $label>attendu :</Split>
      <Split>0 %<span>wbs :</span></Split>
      <Cell>268</Cell>
      <GridLabel htmlFor="marge">marge :</GridLabel>
      <Cell><Input $width={62} id="marge" disabled defaultValue="0" />h<Gap>%</Gap></Cell>
      <span />
      <Cell><Input $width={70} disabled aria-label="marge coût" />€<Gap>%</Gap></Cell>
      <span />
      <GridLabel htmlFor="priorite">priorité :</GridLabel>
      <Cell><Input $width={46} id="priorite" defaultValue="500" /></Cell>
      <span />
      <Cell><Planned>A planifier</Planned></Cell>
    </PilotGrid>
  </Progress>
);

const App = () => (
  <Page>
    <GlobalStyle />
    <Gradients />
    <ProjectList />
    <Splitter><Grip /></Splitter>
    <DetailPane>
      <DetailHeader />
      <Columns>
        <Description />
        <Treatment />
        <SideColumn>
          <Section title="Avancement" />
          <ProgressPanel />
          <Section title="Eléments liés" count={0} />
          <AddTable columns={['élément', 'nom', 'état', 'resp.']} widths={[5, 15, 55, 15, 10]} />
          <Section title="Fichiers attachés" count={0} />
          <AddTable columns={['id', 'fichier']} widths={[10, 5, 85]} link />
          <Section title="Notes" count={0} />
          <AddTable columns={['id', 'note']} widths={[10, 5, 85]} />
        </SideColumn>
        <div>
          <Section title="Elément prédécesseur" count={0} />
          <AddTable columns={['élément', 'nom', 'état', 'date fin']} widths={[10, 20, 40, 15, 15]} />
        </div>
        <div>
          <Section title="Elément successeur" count={0} />
          <AddTable columns={['élément', 'nom', 'état']} widths={[12, 23, 47, 18]} />
        </div>
      </Columns>
      <Toast role="alert">
        <strong>Contrôles invalides.</strong>
        <p>
          Impossible de supprimer cet élément car il a des éléments dépendants
          <br />
          - Travail (1)
        </p>
        <CloseButton type="button" aria-label="fermer">×</CloseButton>
      </Toast>
    </DetailPane>
    <MenuHandle type="button" aria-label="menu" />
    <MenuHandle type="button" aria-label="menu droit" $right />
  </Page>
);

export default App;
